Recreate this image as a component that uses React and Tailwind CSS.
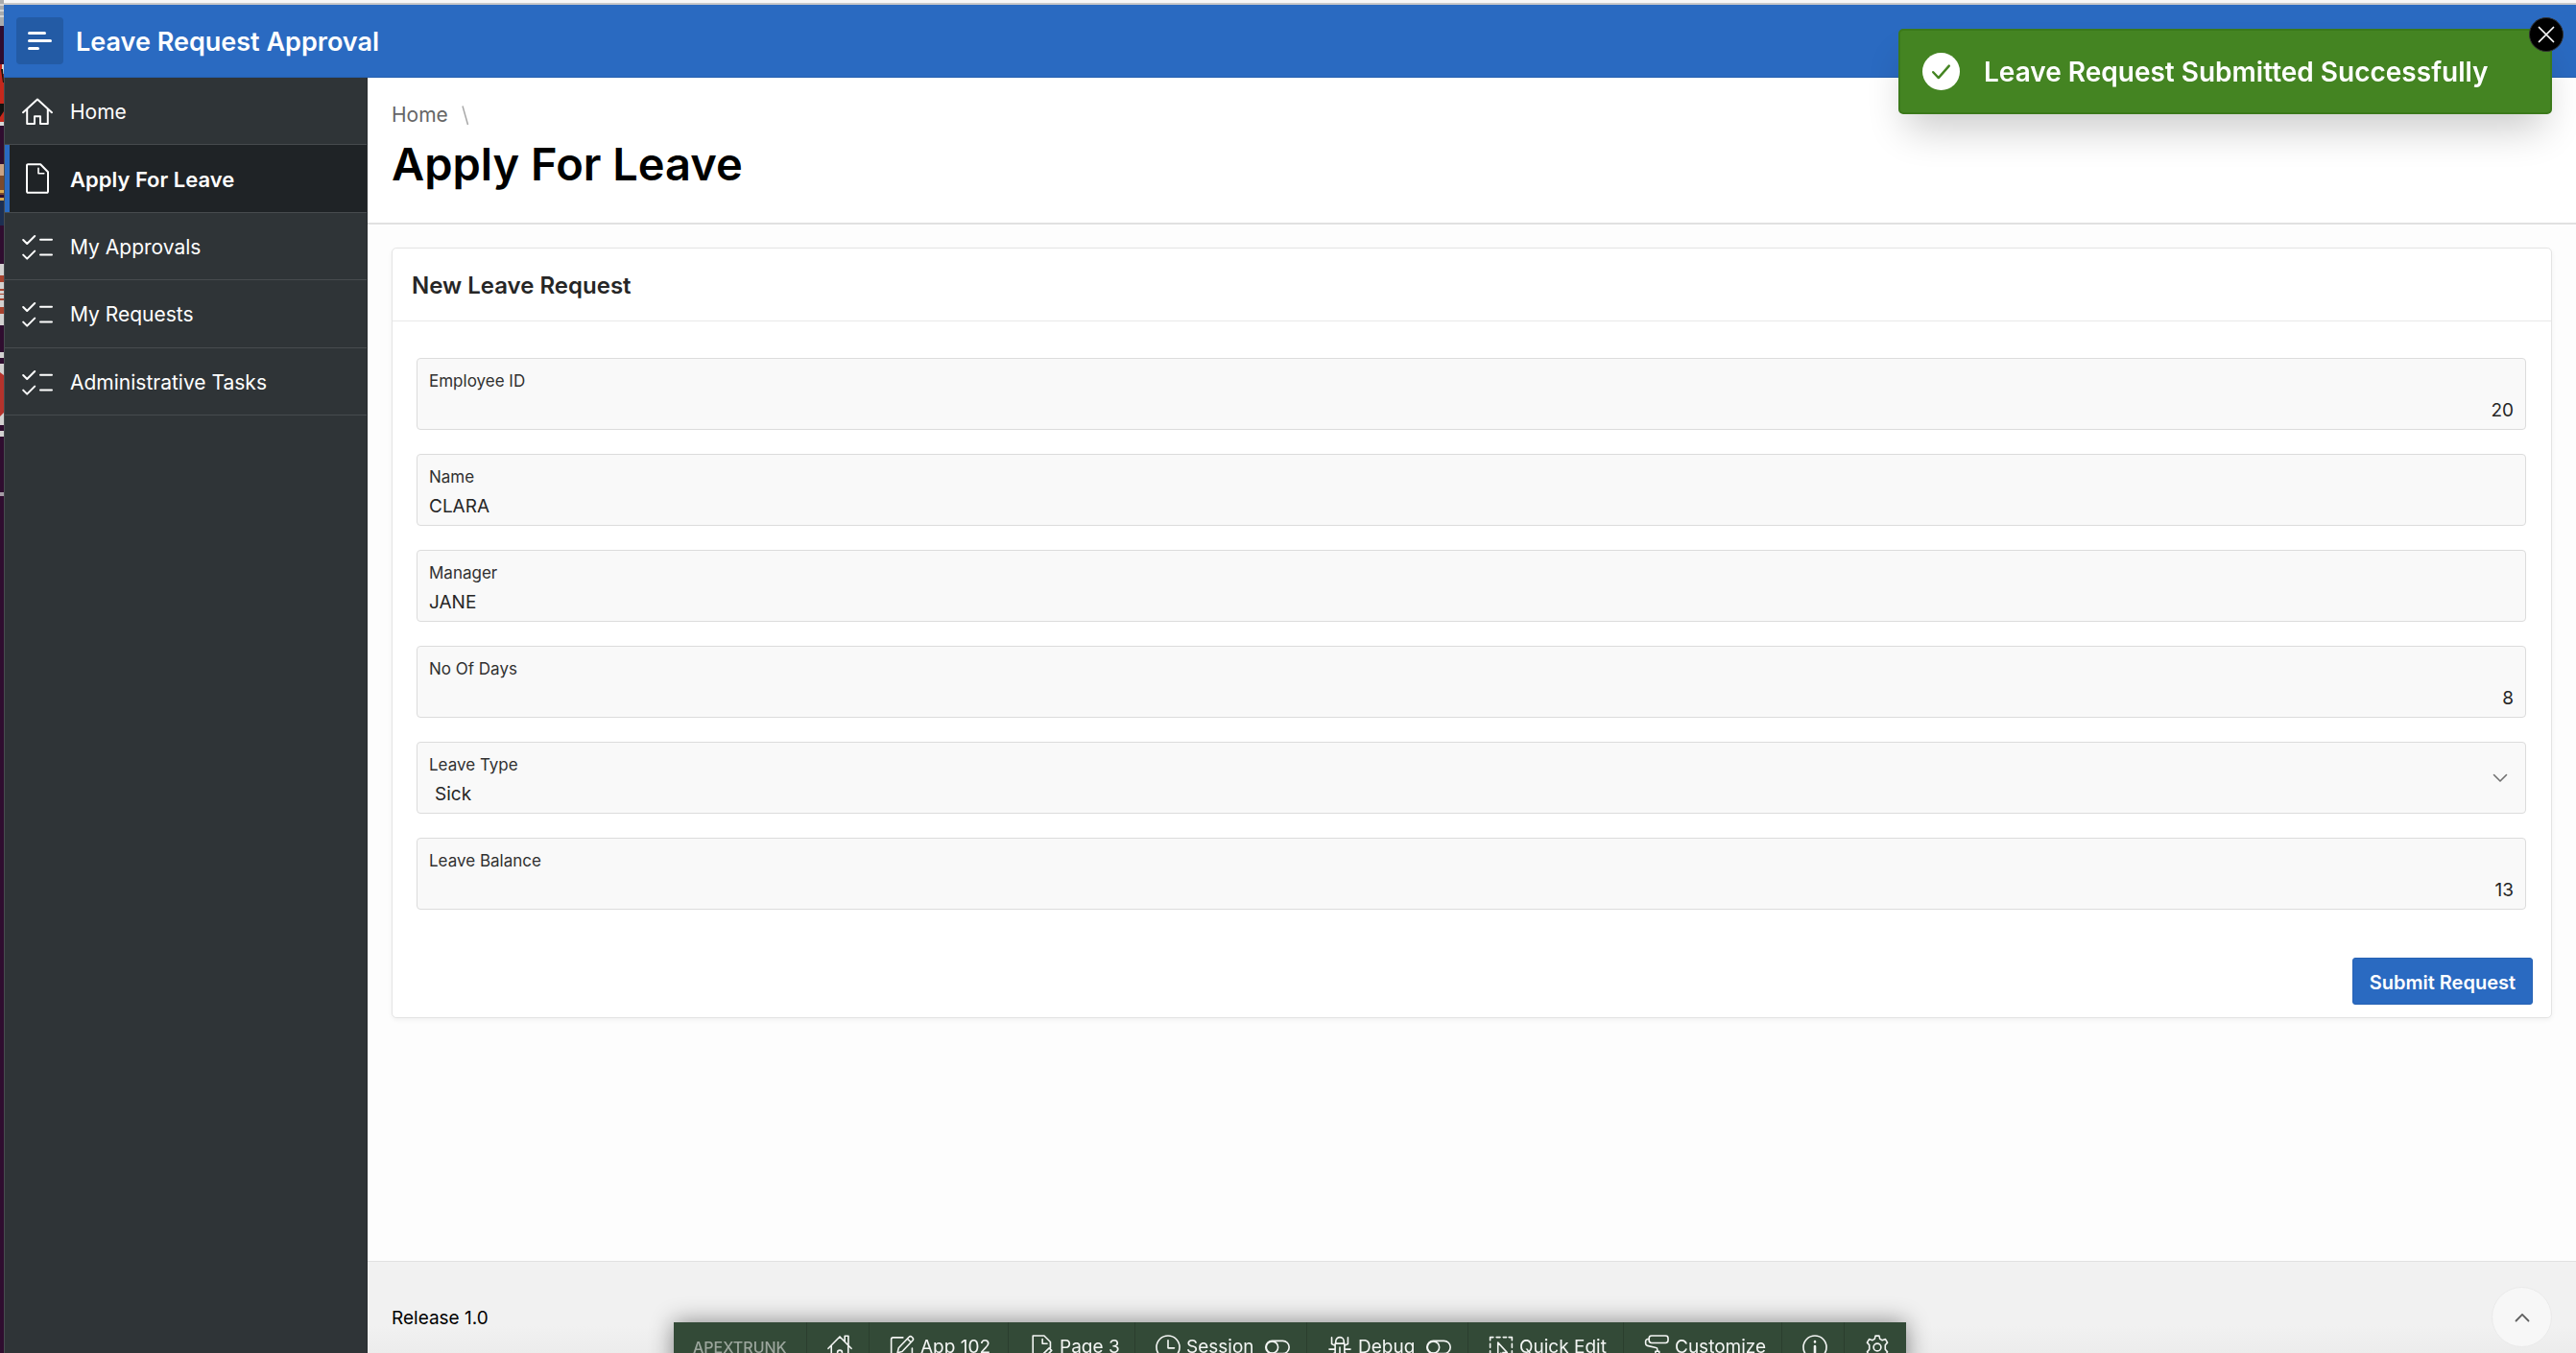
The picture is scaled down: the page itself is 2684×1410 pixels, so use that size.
import React, { useState } from "react";

const Icon = ({ className, children }) => (
  <svg
    viewBox="0 0 16 16"
    fill="none"
    stroke="currentColor"
    strokeLinecap="round"
    strokeLinejoin="round"
    aria-hidden="true"
    className={`shrink-0 ${className}`}
  >
    {children}
  </svg>
);

const HomeIcon = () => (
  <Icon className="size-8">
    <path d="M.5 8.6 8 1.8l7.5 6.8M2.6 6.9v7.6h3.9v-3.9h3v3.9h3.9V6.9" />
  </Icon>
);

const FileIcon = () => (
  <Icon className="size-8">
    <path d="M9.6.6H3.1a.6.6 0 0 0-.6.6v13.6a.6.6 0 0 0 .6.6h9.8a.6.6 0 0 0 .6-.6V4.6z" />
    <path d="M8.5 2.6v2.8h2.9" strokeWidth=".8" />
  </Icon>
);

const TasksIcon = () => (
  <Icon className="size-8">
    <path d="m.6 4.5 2 2 4-4M.6 12.3l2 2 4-4M9.5 4.4h6M9.5 12.2h6" />
  </Icon>
);

const Toggle = () => (
  <Icon className="size-[26px]">
    <rect x=".5" y="3.9" width="15" height="8.2" rx="4.1" />
    <circle cx="4.6" cy="8" r="3.8" />
  </Icon>
);

const navItems = [
  { label: "Home", icon: HomeIcon },
  { label: "Apply For Leave", icon: FileIcon, active: true },
  { label: "My Approvals", icon: TasksIcon },
  { label: "My Requests", icon: TasksIcon },
  { label: "Administrative Tasks", icon: TasksIcon },
];

const fields = [
  { id: "employee-id", label: "Employee ID", value: "20", numeric: true },
  { id: "name", label: "Name", value: "CLARA" },
  { id: "manager", label: "Manager", value: "JANE" },
  { id: "no-of-days", label: "No Of Days", value: "8", numeric: true },
  { id: "leave-type", label: "Leave Type", value: "Sick", options: ["Sick", "Casual", "Earned"] },
  { id: "leave-balance", label: "Leave Balance", value: "13", numeric: true },
];

// Slice of the desktop that shows beside the window
const DesktopEdge = () => (
  <div className="w-1 shrink-0 bg-[#2f0d2f]">
    <svg width="4" height="520" aria-hidden="true" className="block">
      <path fill="#a9abad" d="M0 0h4v27H0z" />
      <path fill="#d3d4d5" d="M0 4h4v2H0zM0 10h4v2H0zM0 16h4v2H0z" />
      <path fill="#c5281c" d="M0 67h4v64H0z" />
      <path fill="#d5d5d5" d="M2 67h2v10H2zM0 127h4v4H0z" />
      <path fill="#141210" d="M1 72h2l1 14H3zM0 108h4v8l-4 6z" />
      <path fill="#c9a284" d="M0 171h4v12H0z" />
      <path fill="#7b4a2c" d="M0 183h4v20H0z" />
      <path fill="#d9a84e" d="M0 198h4v3H0zM0 206h4v3H0z" />
      <path fill="#1d2f52" d="M0 209h4v26H0z" />
      <path fill="#d3d1d0" d="M0 275h4v64H0z" />
      <path fill="#a8432f" d="M0 287h4v7H0zM0 301h4v2H0zM0 306h4v1H0zM0 311h4v2H0zM0 320h4v7H0z" />
      <path fill="#d3d1d0" d="M0 367h4v6H0zM0 379h4v64H0zM0 449h4v6H0z" />
      <path fill="#b5332c" d="M0 388l4 3v39l-4 4z" />
      <path fill="#a59ba5" d="M0 513h4v4H0z" />
    </svg>
  </div>
);

const Field = ({ field }) => {
  const [value, setValue] = useState(field.value);
  const control = "block h-[30px] w-full bg-transparent text-[19px] text-[#262626] outline-none";

  return (
    <div className="relative rounded-[4px] border border-[#dcdcdc] bg-[#f9f9f9] pt-[13px] pb-[5px]">
      <label htmlFor={field.id} className="block px-3 text-[17px] leading-5 text-[#303030]">
        {field.label}
      </label>
      {field.options ? (
        <>
          <select
            id={field.id}
            value={value}
            onChange={(e) => setValue(e.target.value)}
            className={`${control} mt-[5px] appearance-none px-[18px] pt-0.5`}
          >
            {field.options.map((option) => (
              <option key={option}>{option}</option>
            ))}
          </select>
          <Icon className="pointer-events-none absolute top-1/2 right-[18px] size-4 -translate-y-1/2 text-[#707070]">
            <path d="m1.5 4.5 6.5 6.5 6.5-6.5" strokeWidth="1.6" />
          </Icon>
        </>
      ) : (
        <input
          id={field.id}
          type="text"
          value={value}
          onChange={(e) => setValue(e.target.value)}
          className={`${control} mt-[5px] px-3 ${field.numeric ? "text-right" : ""}`}
        />
      )}
    </div>
  );
};

const Toast = ({ onClose }) => (
  <div
    role="alert"
    className="fixed top-[30px] right-[25px] flex h-[89px] w-[681px] items-center rounded-[5px] border-2 border-[#3b791a] bg-[#448422] pl-[23px] text-white shadow-[0_24px_40px_-8px_rgba(0,0,0,0.2)]"
  >
    <Icon className="size-[39px]">
      <circle cx="8" cy="8" r="8" fill="#fff" stroke="none" />
      <path d="m4.6 8.3 2.3 2.4 4.5-5.1" stroke="#448422" />
    </Icon>
    <h2 className="ml-[25px] text-[28px] leading-9 font-semibold">Leave Request Submitted Successfully</h2>
    <button
      type="button"
      aria-label="Close"
      onClick={onClose}
      className="absolute -top-[14px] -right-[14px] flex size-9 items-center justify-center rounded-full border border-[#333] bg-black"
    >
      <Icon className="size-5">
        <path d="m2 2 12 12M14 2 2 14" strokeWidth="1.4" />
      </Icon>
    </button>
  </div>
);

const toolbarButton = "flex items-center border-r border-[#2b3e2e] pl-[21px] pr-[17px]";

const DevToolbar = () => (
  <nav
    aria-label="Developer toolbar"
    className="fixed -bottom-5 left-1/2 ml-0.5 flex h-[52px] w-[1284px] -translate-x-1/2 bg-[#334a37] text-[19px] whitespace-nowrap text-[#f3f5f3] shadow-[0_0_24px_rgba(0,0,0,0.45)]"
  >
    <span className="flex w-[139px] items-center border-r border-[#2b3e2e] pl-5 text-[16px] font-medium text-[#9ca69d]">
      APEXTRUNK
    </span>
    <button type="button" aria-label="Builder home" className={`${toolbarButton} w-[65px]`}>
      <Icon className="size-[26px]">
        <path d="M.6 8.8 8 1.2l7.4 7.6M2.6 7v8.4h3.9v-4a1.5 1.5 0 0 1 3 0v4h3.9V7M11.2 4.3V.8h2.3v6" />
      </Icon>
    </button>
    <button type="button" className={`${toolbarButton} w-[145px] gap-[6px]`}>
      <Icon className="size-[26px]">
        <path d="M8.5 1.8H2.2A1.2 1.2 0 0 0 1 3v11a1.2 1.2 0 0 0 1.2 1.2h11a1.2 1.2 0 0 0 1.2-1.2V8.6" />
        <path d="m5 11.5.7-3L12.4 1.4a1.2 1.2 0 0 1 1.8 0l.5.5a1.2 1.2 0 0 1 0 1.8L8 10.8zM11.4 2.6l2.2 2.2" />
      </Icon>
      App 102
    </button>
    <button type="button" className={`${toolbarButton} w-[132px] gap-[6px]`}>
      <Icon className="size-[26px]">
        <path d="M6.5 15.4H2.6V.6h7.2l4 4v3.8M8.7 2.8v2.9h3M8 15.2l.6-2.4 4.4-4.3 1.6 1.6-4.3 4.4z" />
      </Icon>
      Page 3
    </button>
    <button type="button" className={`${toolbarButton} w-[179px] gap-[6px]`}>
      <Icon className="size-[26px]">
        <circle cx="8" cy="8" r="7.4" />
        <path d="M8 3.5v5h4" />
      </Icon>
      Session
      <span className="ml-auto">
        <Toggle />
      </span>
    </button>
    <button type="button" className={`${toolbarButton} w-[168px] gap-[6px]`}>
      <Icon className="size-[26px]">
        <path d="M5 5.6h6v5.6a3 3 0 0 1-6 0zM5.4 5.4V4.2a2.6 2.6 0 0 1 5.2 0v1.2M8 8v4M5 7 2.8 5.8V1.8M11 7l2.2-1.2v-4M5 9.3H1.2M11 9.3h3.8M5 11.6l-2.4 1.2v2.4M11 11.6l2.4 1.2v2.4" />
      </Icon>
      Debug
      <span className="ml-auto">
        <Toggle />
      </span>
    </button>
    <button type="button" className={`${toolbarButton} w-[162px] gap-[6px]`}>
      <Icon className="size-[26px]">
        <path d="M1 3.6V1.6h2M5 1.6h2.4M9.4 1.6h2M13 1.6h2v2M1 5.8v2.4M15 5.8v2.4M1 10.4v2.4M15 10.4v2.4M1 14.6h3" />
        <path d="M6 5v8.6l2-1.8 1.4 3 1.2-.6-1.4-2.8h2.7z" />
      </Icon>
      Quick Edit
    </button>
    <button type="button" className={`${toolbarButton} w-[165px] gap-[6px]`}>
      <Icon className="size-[26px]">
        <rect x="3.2" y=".6" width="12.2" height="4.6" rx="1.6" />
        <path d="M3.2 2.8H2.4A1.4 1.4 0 0 0 1 4.2v1.4A1.4 1.4 0 0 0 2.1 7l5.6 1.3a1 1 0 0 1 .8 1v1.2M7.3 10.6h2.4v4.8H7.3z" />
      </Icon>
      Customize
    </button>
    <button type="button" aria-label="Layout information" className={`${toolbarButton} w-[65px]`}>
      <Icon className="size-[26px]">
        <circle cx="8" cy="8" r="7.4" />
        <path d="M8 7.4v4.4M8 4.4v.2" strokeWidth="1.6" />
      </Icon>
    </button>
    <button type="button" aria-label="Toolbar settings" className="flex items-center pr-[17px] pl-[21px]">
      <Icon className="size-[26px]">
        <circle cx="8" cy="8" r="2.4" />
        <path d="M6.8.7h2.4l.5 2 1.5.8 2-.7 1.3 2.2-1.4 1.6v2.8l1.4 1.6-1.3 2.2-2-.7-1.5.8-.5 2H6.8l-.5-2-1.5-.8-2 .7L1.5 11l1.4-1.6V6.6L1.5 5l1.3-2.2 2 .7 1.5-.8z" />
      </Icon>
    </button>
  </nav>
);

export default function App() {
  const [showToast, setShowToast] = useState(true);

  return (
    <div className="flex min-h-screen overflow-hidden font-[Inter,'Liberation_Sans',sans-serif]">
      <DesktopEdge />

      <div className="flex min-w-0 flex-1 flex-col">
        <div className="h-[5px] border-b-2 border-[#c8c8ca] bg-[#f6f6f7]" />

        {/* Header */}
        <header className="flex h-19 items-center border-b border-[#2560af] bg-[#2a6ac1] pl-[13px] text-white">
          <button
            type="button"
            aria-label="Toggle navigation"
            className="flex size-[49px] flex-col items-start justify-center gap-[5px] rounded-[4px] bg-[#235ba5] pl-3"
          >
            <span className="h-[3px] w-[19px] rounded-full bg-white" />
            <span className="h-[3px] w-[25px] rounded-full bg-white" />
            <span className="h-[3px] w-[12px] rounded-full bg-white" />
          </button>
          <a href="#" className="ml-[13px] pt-0.5 text-[27px] leading-9 font-semibold">
            Leave Request Approval
          </a>
        </header>

        <div className="flex flex-1">
          {/* Sidebar */}
          <nav className="w-[379px] shrink-0 border-x border-l-[#484c4f] border-r-[#292d30] bg-[#2f3437]">
            <ul>
              {navItems.map(({ label, icon: NavIcon, active }) => (
                <li key={label} className="h-[70px] border-b border-[#474b4e] even:h-[71px]">
                  <a
                    href="#"
                    className={`flex h-full items-center gap-[18px] pl-[18px] text-white ${
                      active
                        ? "bg-[#1f2326] text-[22px] font-semibold shadow-[inset_5px_0_0_#2a6ac1]"
                        : "text-[21px]"
                    }`}
                  >
                    <NavIcon />
                    <span className="pt-0.5">{label}</span>
                  </a>
                </li>
              ))}
            </ul>
          </nav>

          <div className="flex min-w-0 flex-1 flex-col bg-[#fdfdfd]">
            {/* Breadcrumb */}
            <div className="border-b-2 border-[#e1e1e1] bg-white px-[25px] pt-[25px] pb-[31px]">
              <div className="flex h-7 items-center gap-[14px] text-[21px] text-[#666]">
                <a href="#">Home</a>
                <svg width="8" height="22" viewBox="0 0 8 22" aria-hidden="true">
                  <path d="M1 1.5 6.5 21" stroke="#a8a8a8" strokeWidth="1.5" />
                </svg>
              </div>
              <h1 className="mt-[6px] text-[47px] leading-[61px] font-semibold text-black">Apply For Leave</h1>
            </div>

            <main className="flex-1 px-[25px] py-6">
              <section className="rounded-[5px] border border-[#e4e4e4] bg-white shadow-[0_2px_5px_rgba(0,0,0,0.05)]">
                <h2 className="flex h-19 items-center border-b border-[#e9e9e9] px-5 pt-0.5 text-[24px] font-semibold text-[#262626]">
                  New Leave Request
                </h2>
                <form onSubmit={(e) => e.preventDefault()}>
                  <div className="flex flex-col gap-[25px] pt-[38px] pr-[26px] pl-[25px]">
                    {fields.map((field) => (
                      <Field key={field.id} field={field} />
                    ))}
                  </div>
                  <div className="flex justify-end pt-[50px] pr-[19px] pb-[13px]">
                    <button
                      type="submit"
                      onClick={() => setShowToast(true)}
                      className="h-[49px] rounded-[3px] border border-[#2662b4] bg-[#2a6ac1] px-[17px] pt-0.5 text-[20px] font-semibold text-white"
                    >
                      Submit Request
                    </button>
                  </div>
                </form>
              </section>
            </main>

            <footer className="h-24 border-t border-[#e1e1e1] bg-linear-to-b from-[#f1f1f1] from-70% to-[#ececec] px-[25px] pt-[45px] text-[19px] leading-7 text-black">
              Release 1.0
            </footer>
          </div>
        </div>
      </div>

      <button
        type="button"
        aria-label="Back to top"
        onClick={() => window.scrollTo({ top: 0 })}
        className="fixed right-[25px] bottom-[6px] flex size-[63px] items-center justify-center rounded-full border border-[#e9e9e9] bg-[#f7f7f7] text-[#606060]"
      >
        <Icon className="size-4">
          <path d="M1.5 11.5 8 4.8l6.5 6.7" strokeWidth="1.8" />
        </Icon>
      </button>

      <DevToolbar />
      {showToast && <Toast onClose={() => setShowToast(false)} />}
    </div>
  );
}
